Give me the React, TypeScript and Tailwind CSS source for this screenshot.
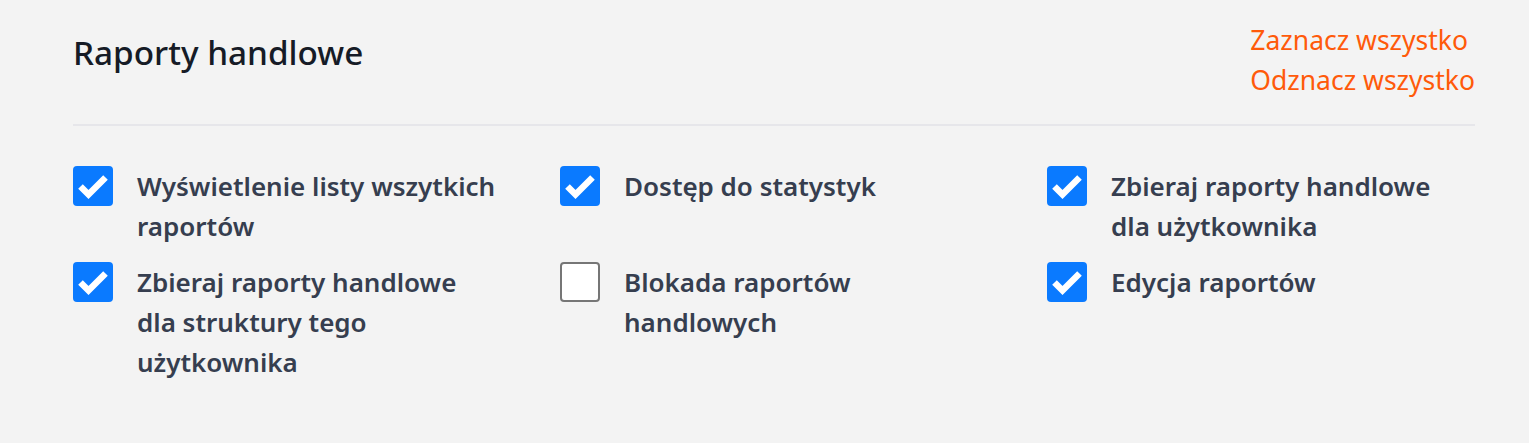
type Item = { label: string; checked: boolean };

const items: Item[] = [
  { label: 'Wyświetlenie listy wszytkich raportów', checked: true },
  { label: 'Dostęp do statystyk', checked: true },
  { label: 'Zbieraj raporty handlowe dla użytkownika', checked: true },
  { label: 'Zbieraj raporty handlowe dla struktury tego użytkownika', checked: true },
  { label: 'Blokada raportów handlowych', checked: false },
  { label: 'Edycja raportów', checked: true },
];

const Box = ({ checked }: { checked: boolean }) =>
  checked ? (
    <span className="h-10 w-10 shrink-0 rounded-[4px] bg-[#0a7aff]">
      <svg viewBox="0 0 40 40" className="h-10 w-10">
        <path d="M7.5 20.5 L15.5 28.5 L32.5 11.5" fill="none" stroke="white" strokeWidth="6.5" strokeLinejoin="miter" />
      </svg>
    </span>
  ) : (
    <span className="h-10 w-10 shrink-0 rounded-[4px] border-2 border-[#767676] bg-white" />
  );

export default function App() {
  return (
    <main className="min-h-[443px] w-full bg-[#f3f3f3] pl-[73px] pr-[54px] pt-5 font-['Noto_Sans',sans-serif]">
      <div className="flex items-start justify-between">
        <h2 className="text-[33.3px] font-medium leading-[64px] text-[#161b26]">Raporty handlowe</h2>
        <div className="flex flex-col text-[26.5px] leading-10 text-[#ff5a0a]">
          <a href="#">Zaznacz wszystko</a>
          <a href="#">Odznacz wszystko</a>
        </div>
      </div>
      <div className="mt-6 h-[2px] bg-[#e6e6ea]" />
      <div className="mt-10 grid grid-cols-[repeat(3,428px)] gap-x-[59px] gap-y-4">
        {items.map((item) => (
          <label key={item.label} className="flex items-start gap-6">
            <Box checked={item.checked} />
            <span className="max-w-[360px] text-[26px] font-semibold leading-10 text-[#363e4f]">{item.label}</span>
          </label>
        ))}
      </div>
    </main>
  );
}
